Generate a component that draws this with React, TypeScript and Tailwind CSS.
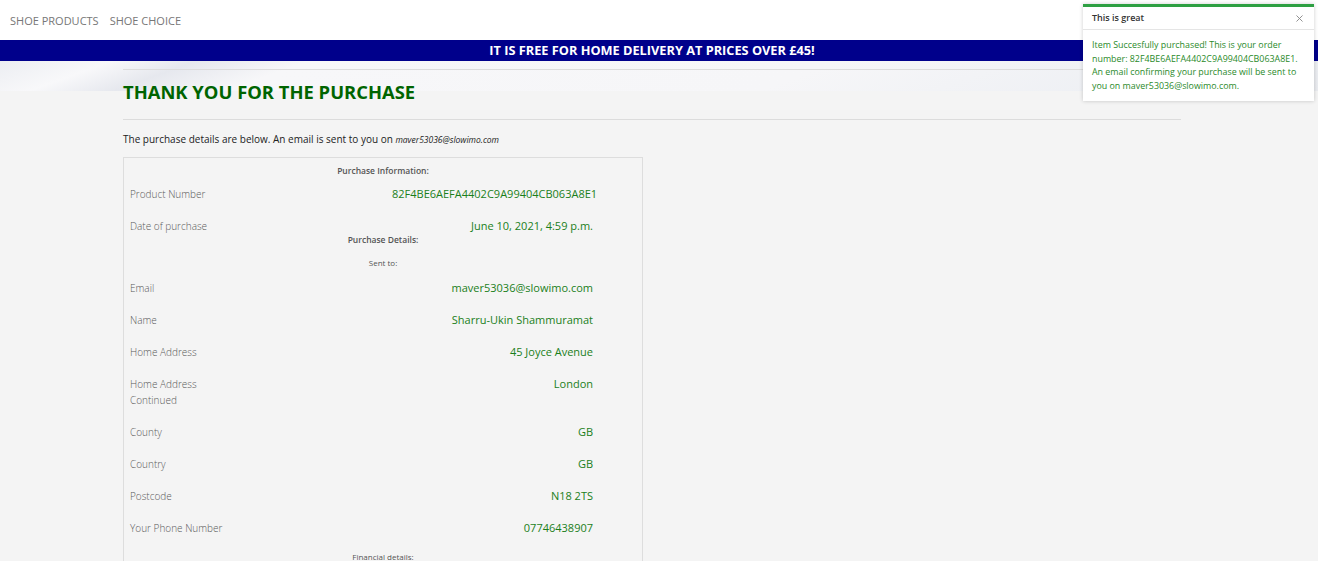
import { X } from "lucide-react";

const purchaseInfo = [
  { label: "Product Number", value: "82F4BE6AEFA4402C9A99404CB063A8E1" },
  { label: "Date of purchase", value: "June 10, 2021, 4:59 p.m." },
];

const sentTo = [
  { label: "Email", value: "maver53036@slowimo.com" },
  { label: "Name", value: "Sharru-Ukin Shammuramat" },
  { label: "Home Address", value: "45 Joyce Avenue" },
  { label: "Home Address Continued", value: "London" },
  { label: "County", value: "GB" },
  { label: "Country", value: "GB" },
  { label: "Postcode", value: "N18 2TS" },
  { label: "Your Phone Number", value: "07746438907" },
];

function Row({ label, value }: { label: string; value: string }) {
  return (
    <div className="flex pl-[6px] pb-[16px] leading-[16px]">
      <div className="w-[105px] text-[10px] text-[#5a5a5a] font-light">{label}</div>
      <div className="ml-[157px] w-[201px] text-right text-[11px] text-[#1a7f1a] whitespace-nowrap">
        {value}
      </div>
    </div>
  );
}

function Toast() {
  return (
    <div className="absolute right-[4px] top-[4px] w-[231px] bg-white border-t-[3px] border-[#2ea043] shadow-[0_0_4px_rgba(0,0,0,0.2)]">
      <div className="flex items-center justify-between px-[9px] h-[23px] border-b border-[#e5e5e5]">
        <span className="text-[9px] font-semibold text-[#333]">This is great</span>
        <X className="w-[11px] h-[11px] text-[#888]" strokeWidth={2} />
      </div>
      <div className="px-[9px] pt-[8px] pb-[9px] text-[8.9px] leading-[13.5px] text-[#2a8a2a]">
        Item Succesfully purchased! This is your order number: 82F4BE6AEFA4402C9A99404CB063A8E1.
        An email confirming your purchase will be sent to you on maver53036@slowimo.com.
      </div>
    </div>
  );
}

export default function App() {
  return (
    <div className="relative min-h-[561px] bg-[#f4f4f4] font-['Open_Sans',sans-serif] overflow-hidden">
      <nav className="h-[40px] bg-white flex items-center gap-[11px] px-[10px] pt-[2px]">
        <a className="text-[11px] text-[#777] uppercase">Shoe Products</a>
        <a className="text-[11px] text-[#777] uppercase">Shoe Choice</a>
      </nav>
      <div className="h-[21px] bg-[#00008b] flex items-center justify-center pr-[14px]">
        <span className="text-white font-bold text-[12.75px]">
          IT IS FREE FOR HOME DELIVERY AT PRICES OVER £45!
        </span>
      </div>
      <div className="h-[30px] -mb-[30px] bg-[linear-gradient(160deg,#eceef2_0%,#f8f8fa_8%,#e6e8ee_14%,#f7f7f9_22%,#f6f6f8_60%,#eef0f4_85%,#e9ebef_100%)]" />
      <div className="relative ml-[123px] w-[1058px] pt-[8px]">
        <div className="border-t border-[#dcdcdc]" />
        <h1 className="pt-[10px] pb-[15px] text-[18.4px] font-bold text-[#006400] leading-[24px]">
          THANK YOU FOR THE PURCHASE
        </h1>
        <div className="border-t border-[#dcdcdc]" />
        <p className="mt-[11px] text-[10px] text-[#222] leading-[16px]">
          The purchase details are below. An email is sent to you on{" "}
          <em className="text-[8.5px]">maver53036@slowimo.com</em>
        </p>
        <div className="mt-[9px] w-[520px] border border-[#dddddd] border-b-0">
          <div className="text-center text-[8.5px] font-semibold text-[#555] leading-[12px] pt-[7px] pb-[9px]">
            Purchase Information:
          </div>
          {purchaseInfo.map((r) => (
            <Row key={r.label} {...r} />
          ))}
          <div className="-mt-[16px] text-center text-[8.5px] font-semibold text-[#555] leading-[12px] pb-[11px]">
            Purchase Details:
          </div>
          <div className="text-center text-[8px] text-[#555] leading-[12px] pb-[11px]">Sent to:</div>
          {sentTo.map((r) => (
            <Row key={r.label} {...r} />
          ))}
          <div className="-mt-[1px] text-center text-[8px] text-[#555] leading-[12px] pb-[10px]">
            Financial details:
          </div>
        </div>
      </div>
      <Toast />
    </div>
  );
}
